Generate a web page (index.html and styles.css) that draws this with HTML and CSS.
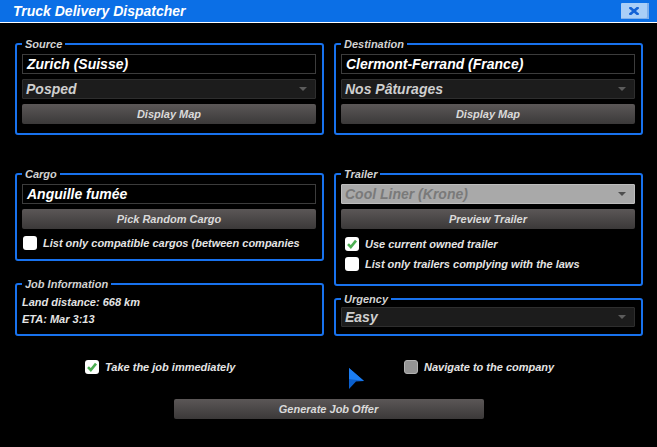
FILE: index.html
```html
<!DOCTYPE html>
<html lang="en">
<head>
<meta charset="utf-8">
<title>Truck Delivery Dispatcher</title>
<link rel="stylesheet" href="styles.css">
</head>
<body>
<div class="window">
  <header class="titlebar">
    <span class="title">Truck Delivery Dispatcher</span>
    <button class="close" type="button" aria-label="Close">
      <svg width="10" height="8" viewBox="0 0 10 8"><path d="M1.5 1 L8.5 7 M8.5 1 L1.5 7" stroke="#1362d6" stroke-width="2.6" stroke-linecap="square"/></svg>
    </button>
  </header>

  <main class="content">
    <div class="grid">
      <fieldset class="box box-route">
        <legend>Source</legend>
        <div class="stack">
          <div class="field">Zurich (Suisse)</div>
          <div class="select">Posped<span class="arrow"></span></div>
          <button class="btn" type="button">Display Map</button>
        </div>
      </fieldset>
      <fieldset class="box box-route">
        <legend>Destination</legend>
        <div class="stack">
          <div class="field">Clermont-Ferrand (France)</div>
          <div class="select">Nos Pâturages<span class="arrow"></span></div>
          <button class="btn" type="button">Display Map</button>
        </div>
      </fieldset>
    </div>

    <div class="grid grid-mid">
      <div class="col">
        <fieldset class="box box-cargo">
          <legend>Cargo</legend>
          <div class="stack">
            <div class="field">Anguille fumée</div>
            <button class="btn" type="button">Pick Random Cargo</button>
            <label class="check check-cargo"><span class="cb"></span><span class="lbl">List only compatible cargos (between companies</span></label>
          </div>
        </fieldset>
        <fieldset class="box box-job">
          <legend>Job Information</legend>
          <p class="info">Land distance: 668 km</p>
          <p class="info">ETA: Mar 3:13</p>
        </fieldset>
      </div>
      <div class="col col-right">
        <fieldset class="box box-trailer">
          <legend>Trailer</legend>
          <div class="stack">
            <div class="select select-disabled">Cool Liner (Krone)<span class="arrow"></span></div>
            <button class="btn" type="button">Preview Trailer</button>
            <label class="check check-first"><span class="cb cb-on"><svg width="14" height="14" viewBox="0 0 14 14"><path d="M3 7.2 L5.8 10 L11 3.6" fill="none" stroke="#4cae52" stroke-width="2.6"/></svg></span><span class="lbl">Use current owned trailer</span></label>
            <label class="check check-second"><span class="cb"></span><span class="lbl">List only trailers complying with the laws</span></label>
          </div>
        </fieldset>
        <fieldset class="box box-urgency">
          <legend>Urgency</legend>
          <div class="select">Easy<span class="arrow"></span></div>
        </fieldset>
      </div>
    </div>

    <div class="grid options">
      <label class="check opt"><span class="cb cb-on"><svg width="14" height="14" viewBox="0 0 14 14"><path d="M3 7.2 L5.8 10 L11 3.6" fill="none" stroke="#4cae52" stroke-width="2.6"/></svg></span><span class="lbl">Take the job immediately</span></label>
      <label class="check opt"><span class="cb cb-gray"></span><span class="lbl">Navigate to the company</span></label>
    </div>

    <div class="actions">
      <button class="btn btn-wide" type="button">Generate Job Offer</button>
    </div>
  </main>

  <svg class="cursor" width="16" height="22" viewBox="0 0 16 22">
    <polygon points="0,0 15,13 7,13.5 0,21" fill="#0b5fcc"/>
    <polygon points="0,0 15,13 0,11" fill="#1b7df2"/>
  </svg>
</div>
</body>
</html>
```

FILE: styles.css
```css
* { box-sizing: border-box; }

html, body {
  margin: 0;
  padding: 0;
  background: #000;
}

body {
  width: 657px;
  height: 447px;
  overflow: hidden;
  color: #e2e2e2;
}

.window, .window * {
  font-family: "Liberation Sans", Arial, sans-serif;
  font-style: italic;
  font-weight: bold;
}

.window {
  position: relative;
  width: 657px;
  height: 447px;
  background: #000;
}

.titlebar {
  display: flex;
  align-items: flex-start;
  justify-content: space-between;
  height: 23px;
  background: #0b6fe6;
  border-bottom: 1px solid #ffffff;
  padding-left: 13px;
}

.title {
  font-size: 14px;
  line-height: 22px;
  color: #fff;
}

.close {
  margin: 3px 8px 0 0;
  width: 28px;
  height: 16px;
  padding: 0;
  border: none;
  border-radius: 1px;
  background: #a9cef7;
  box-shadow: inset -2px -1px 0 #7eafec;
  display: flex;
  align-items: center;
  justify-content: center;
}

.close svg { display: block; margin-right: 2px; }

.content {
  padding: 15px 14px 0 15px;
}

.grid {
  display: grid;
  grid-template-columns: 309px 309px;
  column-gap: 10px;
}

.grid-mid {
  margin-top: 33px;
}

.col {
  display: flex;
  flex-direction: column;
}

.box {
  margin: 0;
  min-width: 0;
  border: 2px solid #1872ee;
  border-radius: 3px;
  padding: 4px 6px 9px 5px;
}

.box legend {
  padding: 0 3px;
  font-size: 11px;
  line-height: 12px;
  color: #d2d2d2;
}

.stack {
  display: flex;
  flex-direction: column;
  gap: 5px;
}

.field {
  height: 20px;
  border: 1px solid #3c3c3c;
  background: #000;
  color: #fff;
  font-size: 14px;
  line-height: 18px;
  padding-left: 4px;
  white-space: nowrap;
  overflow: hidden;
}

.select {
  position: relative;
  height: 20px;
  border: 1px solid #2e2e2e;
  border-radius: 1px;
  background: #1c1c1c;
  color: #cfcfcf;
  font-size: 14px;
  line-height: 18px;
  padding-left: 3px;
  white-space: nowrap;
}

.arrow {
  position: absolute;
  right: 8px;
  top: 7px;
  width: 0;
  height: 0;
  border-left: 4px solid transparent;
  border-right: 4px solid transparent;
  border-top: 4px solid #5c5c5c;
}

.select-disabled {
  background: #a9a9a9;
  border-color: #bdbdbd;
  color: #7a7a7a;
}

.select-disabled .arrow { border-top-color: #4e4e4e; }

.btn {
  display: block;
  width: 100%;
  height: 20px;
  padding: 0;
  border: none;
  border-radius: 2px;
  background: linear-gradient(#5b5757, #3b3939);
  color: #dadada;
  font-size: 11px;
  line-height: 20px;
  text-align: center;
}

.check {
  display: flex;
  align-items: center;
  gap: 6px;
  height: 14px;
  font-size: 11px;
  line-height: 14px;
  color: #e4e4e4;
  white-space: nowrap;
}

.cb {
  flex: none;
  width: 14px;
  height: 14px;
  border-radius: 3px;
  background: #fff;
  display: block;
}

.cb svg { display: block; }

.cb-gray {
  background: #949494;
  border: 1px solid #b3b3b3;
}

.check-cargo {
  margin-top: 2px;
  margin-left: 1px;
}

.box-cargo { padding-bottom: 9px; }

.box-job {
  margin-top: 17px;
  padding: 4px 6px 6px 5px;
}

.info {
  margin: 0;
  font-size: 11px;
  line-height: 17px;
  color: #e4e4e4;
}

.box-trailer { padding-bottom: 13px; }

.check-first { margin-top: 3px; margin-left: 4px; }
.check-second { margin-top: 1px; margin-left: 4px; }

.box-urgency {
  margin-top: 7px;
  padding: 2px 6px 7px 5px;
}

.options {
  margin-top: 24px;
}

.opt {
  padding-left: 70px;
}

.actions {
  display: flex;
  justify-content: center;
  margin-top: 25px;
  padding-right: 1px;
}

.btn-wide {
  width: 310px;
}

.cursor {
  position: absolute;
  left: 349px;
  top: 368px;
}
```
